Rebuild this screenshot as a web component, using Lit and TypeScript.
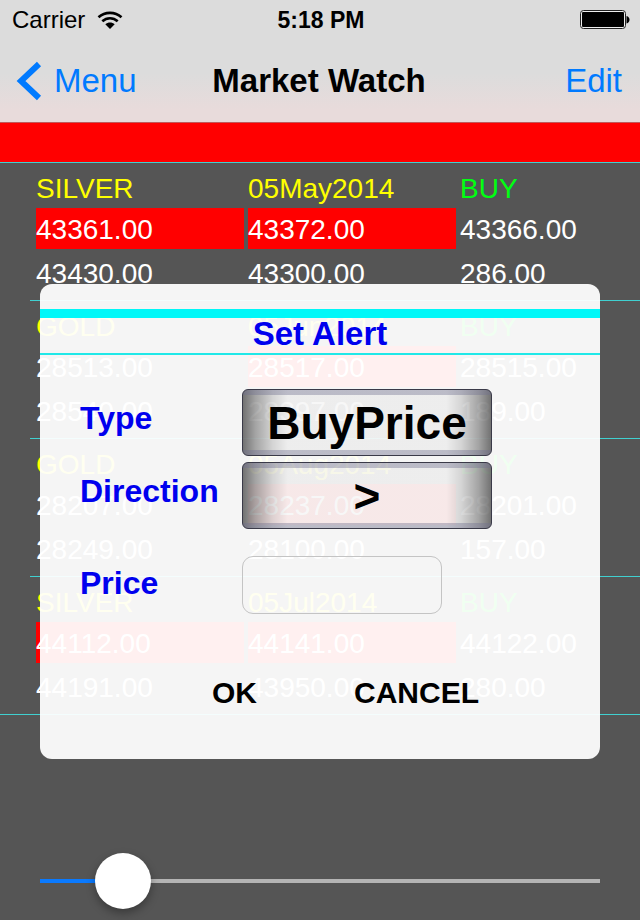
import { LitElement, html, css, svg } from "lit";
import { customElement, property, state } from "lit/decorators.js";
import { classMap } from "lit/directives/class-map.js";

interface Quote {
  name: string;
  expiry: string;
  side: string;
  prices: string[];
  ranges: string[];
  falling: boolean[];
}

const QUOTES: Quote[] = [
  {
    name: "SILVER",
    expiry: "05May2014",
    side: "BUY",
    prices: ["43361.00", "43372.00", "43366.00"],
    ranges: ["43430.00", "43300.00", "286.00"],
    falling: [true, true, false],
  },
  {
    name: "GOLD",
    expiry: "05Jun2014",
    side: "BUY",
    prices: ["28513.00", "28517.00", "28515.00"],
    ranges: ["28540.00", "28397.00", "189.00"],
    falling: [false, true, false],
  },
  {
    name: "GOLD",
    expiry: "05Aug2014",
    side: "BUY",
    prices: ["28207.00", "28237.00", "28201.00"],
    ranges: ["28249.00", "28100.00", "157.00"],
    falling: [false, true, false],
  },
  {
    name: "SILVER",
    expiry: "05Jul2014",
    side: "BUY",
    prices: ["44112.00", "44141.00", "44122.00"],
    ranges: ["44191.00", "43950.00", "280.00"],
    falling: [true, true, false],
  },
];

const wifi = svg`<svg class="wifi" viewBox="0 0 26 18" width="26" height="18" aria-hidden="true">
  <g fill="none" stroke="#000" stroke-width="2.600">
    <path d="M1.500 6.300 C8 0.400 18 0.400 24.500 6.300"></path>
    <path d="M5.300 10.300 C9.800 6.200 16.200 6.200 20.700 10.300"></path>
  </g>
  <path d="M13 18 L8.300 13.300 C11 10.800 15 10.800 17.700 13.300 Z"></path>
</svg>`;

const battery = svg`<svg class="battery" viewBox="0 0 50 20" width="50" height="20" aria-label="Battery full">
  <rect x="0.500" y="0.500" width="45" height="18" rx="3" fill="#eee" stroke="#222"></rect>
  <rect x="2" y="2" width="42" height="15" rx="1" fill="#000"></rect>
  <path d="M46.500 6 C50.500 7 50.500 12.500 46.500 13.500 Z"></path>
</svg>`;

@customElement("top-bar")
export class TopBar extends LitElement {
  static styles = css`
    :host {
      display: block;
      background: linear-gradient(#dcdcdc 60%, #e8dbdb 90%);
      border-bottom: 1px solid #c05a5a;
    }
    .status,
    .nav {
      display: grid;
      grid-template-columns: 1fr auto 1fr;
      align-items: center;
    }
    .status {
      height: 40px;
      padding: 0 10px 0 12px;
      font-size: 24px;
    }
    .carrier {
      display: flex;
      align-items: center;
      gap: 12px;
    }
    .time {
      font-weight: bold;
      font-size: 23px;
    }
    .battery {
      justify-self: end;
    }
    .nav {
      height: 82px;
      padding: 0 18px 0 16px;
    }
    .title {
      margin: 0;
      font-size: 33px;
      font-weight: bold;
    }
    .action {
      border: 0;
      padding: 0;
      background: none;
      font: inherit;
      font-size: 33px;
      color: #007aff;
      justify-self: end;
      cursor: pointer;
    }
    .back {
      display: flex;
      align-items: center;
      gap: 12px;
      justify-self: start;
    }
  `;

  render() {
    return html`
      <div class="status">
        <span class="carrier">Carrier ${wifi}</span>
        <span class="time">5:18 PM</span>
        ${battery}
      </div>
      <nav class="nav">
        <button class="action back">
          <svg viewBox="0 0 26 40" width="26" height="40" aria-hidden="true">
            <path d="M23 3 L5 20 L23 37" fill="none" stroke="#007aff" stroke-width="6"></path>
          </svg>
          Menu
        </button>
        <h1 class="title">Market Watch</h1>
        <button class="action">Edit</button>
      </nav>
    `;
  }
}

@customElement("quote-table")
export class QuoteTable extends LitElement {
  @property({ attribute: false }) quotes: Quote[] = [];

  static styles = css`
    :host {
      display: block;
      border-top: 1px solid #40d0d0;
      border-bottom: 1px solid #40d0d0;
    }
    table {
      display: block;
      padding-left: 30px;
      font-size: 28px;
      color: #fff;
    }
    tbody {
      display: block;
      padding: 4px 4px 7px 6px;
    }
    tbody + tbody {
      border-top: 1px solid #40d0d0;
    }
    tr {
      display: grid;
      grid-template-columns: 13fr 13fr 11fr;
      column-gap: 4px;
      line-height: 39px;
    }
    tr + tr + tr {
      margin-top: 3px;
    }
    th,
    td {
      padding: 2px 0 0;
      font-weight: normal;
      text-align: left;
    }
    .name {
      color: #ff0;
    }
    .side {
      color: #0f1;
    }
    .falling {
      background: #f00;
    }
  `;

  render() {
    return html`<table>
      ${this.quotes.map(
        (q) => html`<tbody>
          <tr>
            <th class="name" scope="rowgroup">${q.name}</th>
            <td class="name">${q.expiry}</td>
            <td class="side">${q.side}</td>
          </tr>
          <tr>
            ${q.prices.map((p, i) => html`<td class=${classMap({ falling: q.falling[i] })}>${p}</td>`)}
          </tr>
          <tr>
            ${q.ranges.map((p) => html`<td>${p}</td>`)}
          </tr>
        </tbody>`,
      )}
    </table>`;
  }
}

@customElement("alert-dialog")
export class AlertDialog extends LitElement {
  static styles = css`
    :host {
      display: block;
      border-radius: 12px;
      background: rgba(255, 255, 255, 0.94);
      padding: 25px 0 45px;
      font-weight: bold;
    }
    .heading {
      margin: 0;
      border-top: 9px solid #00f8f8;
      border-bottom: 2px solid #20e8e8;
      padding-bottom: 3px;
      font-size: 33px;
      line-height: 32px;
      text-align: center;
      color: #00e;
    }
    .fields {
      display: grid;
      grid-template-columns: 162px minmax(0, 1fr);
      row-gap: 6px;
      padding: 34px 40px 0;
    }
    label {
      padding-bottom: 8px;
      align-self: center;
      font-size: 32px;
      color: #00e;
    }
    select {
      appearance: none;
      width: 250px;
      max-width: 100%;
      height: 67px;
      padding: 0;
      border: 1px solid #3a3a48;
      border-radius: 6px;
      background:
        linear-gradient(#70708f66, #70708f66) top / 100% 5px no-repeat,
        linear-gradient(#70708f66, #70708f66) bottom / 100% 5px no-repeat,
        linear-gradient(90deg, #0008, #0005 5%, #0002 12%, #00000008 18%, #00000008 82%, #0002 88%, #0005 95%, #0008);
      font: inherit;
      font-size: 46px;
      color: #000;
      text-align: center;
      text-align-last: center;
    }
    input {
      box-sizing: border-box;
      width: 200px;
      max-width: 100%;
      height: 58px;
      border: 1px solid #c4c4c4;
      border-radius: 11px;
      background: none;
      padding: 0 12px;
      font: inherit;
      font-size: 32px;
    }
    .price {
      margin-top: 21px;
    }
    label.price {
      padding-bottom: 4px;
    }
    .buttons {
      display: flex;
      gap: 97px;
      padding: 58px 0 0 172px;
    }
    button {
      border: 0;
      padding: 0;
      background: none;
      font: inherit;
      font-size: 30px;
      line-height: 42px;
      color: #000;
    }
  `;

  render() {
    return html`
      <h2 class="heading">Set Alert</h2>
      <div class="fields">
        <label for="type">Type</label>
        <select id="type"><option>BuyPrice</option><option>SellPrice</option></select>
        <label for="direction">Direction</label>
        <select id="direction"><option>&gt;</option><option>&lt;</option></select>
        <label class="price" for="price">Price</label>
        <input class="price" id="price" type="text" inputmode="decimal" />
      </div>
      <div class="buttons">
        <button>OK</button>
        <button>CANCEL</button>
      </div>
    `;
  }
}

@customElement("app-root")
export class AppRoot extends LitElement {
  @state() private level = 11;

  static styles = css`
    :host {
      display: flex;
      flex-direction: column;
      position: relative;
      min-height: 100vh;
      background: #555;
      font-family: "Liberation Sans", Arial, sans-serif;
    }
    .banner {
      height: 39px;
      background: #f00;
    }
    .overlay {
      position: absolute;
      inset: 284px 40px auto;
    }
    .slider {
      appearance: none;
      margin: auto 40px 11px;
      height: 56px;
      background: linear-gradient(#0a7aff, #0a7aff) left / var(--fill) 4px no-repeat,
        linear-gradient(#b4b4b4, #b4b4b4) center / 100% 4px no-repeat;
    }
    .slider::-webkit-slider-thumb {
      appearance: none;
      width: 56px;
      height: 56px;
      border-radius: 50%;
      background: #fff;
      box-shadow: 0 4px 10px #0005;
    }
  `;

  private onInput(e: Event) {
    this.level = Number((e.target as HTMLInputElement).value);
  }

  render() {
    return html`
      <top-bar></top-bar>
      <div class="banner"></div>
      <quote-table .quotes=${QUOTES}></quote-table>
      <input
        class="slider"
        type="range"
        min="0"
        max="100"
        aria-label="Level"
        .value=${String(this.level)}
        style="--fill: ${this.level}%"
        @input=${this.onInput}
      />
      <alert-dialog class="overlay" role="dialog" aria-label="Set Alert"></alert-dialog>
    `;
  }
}
